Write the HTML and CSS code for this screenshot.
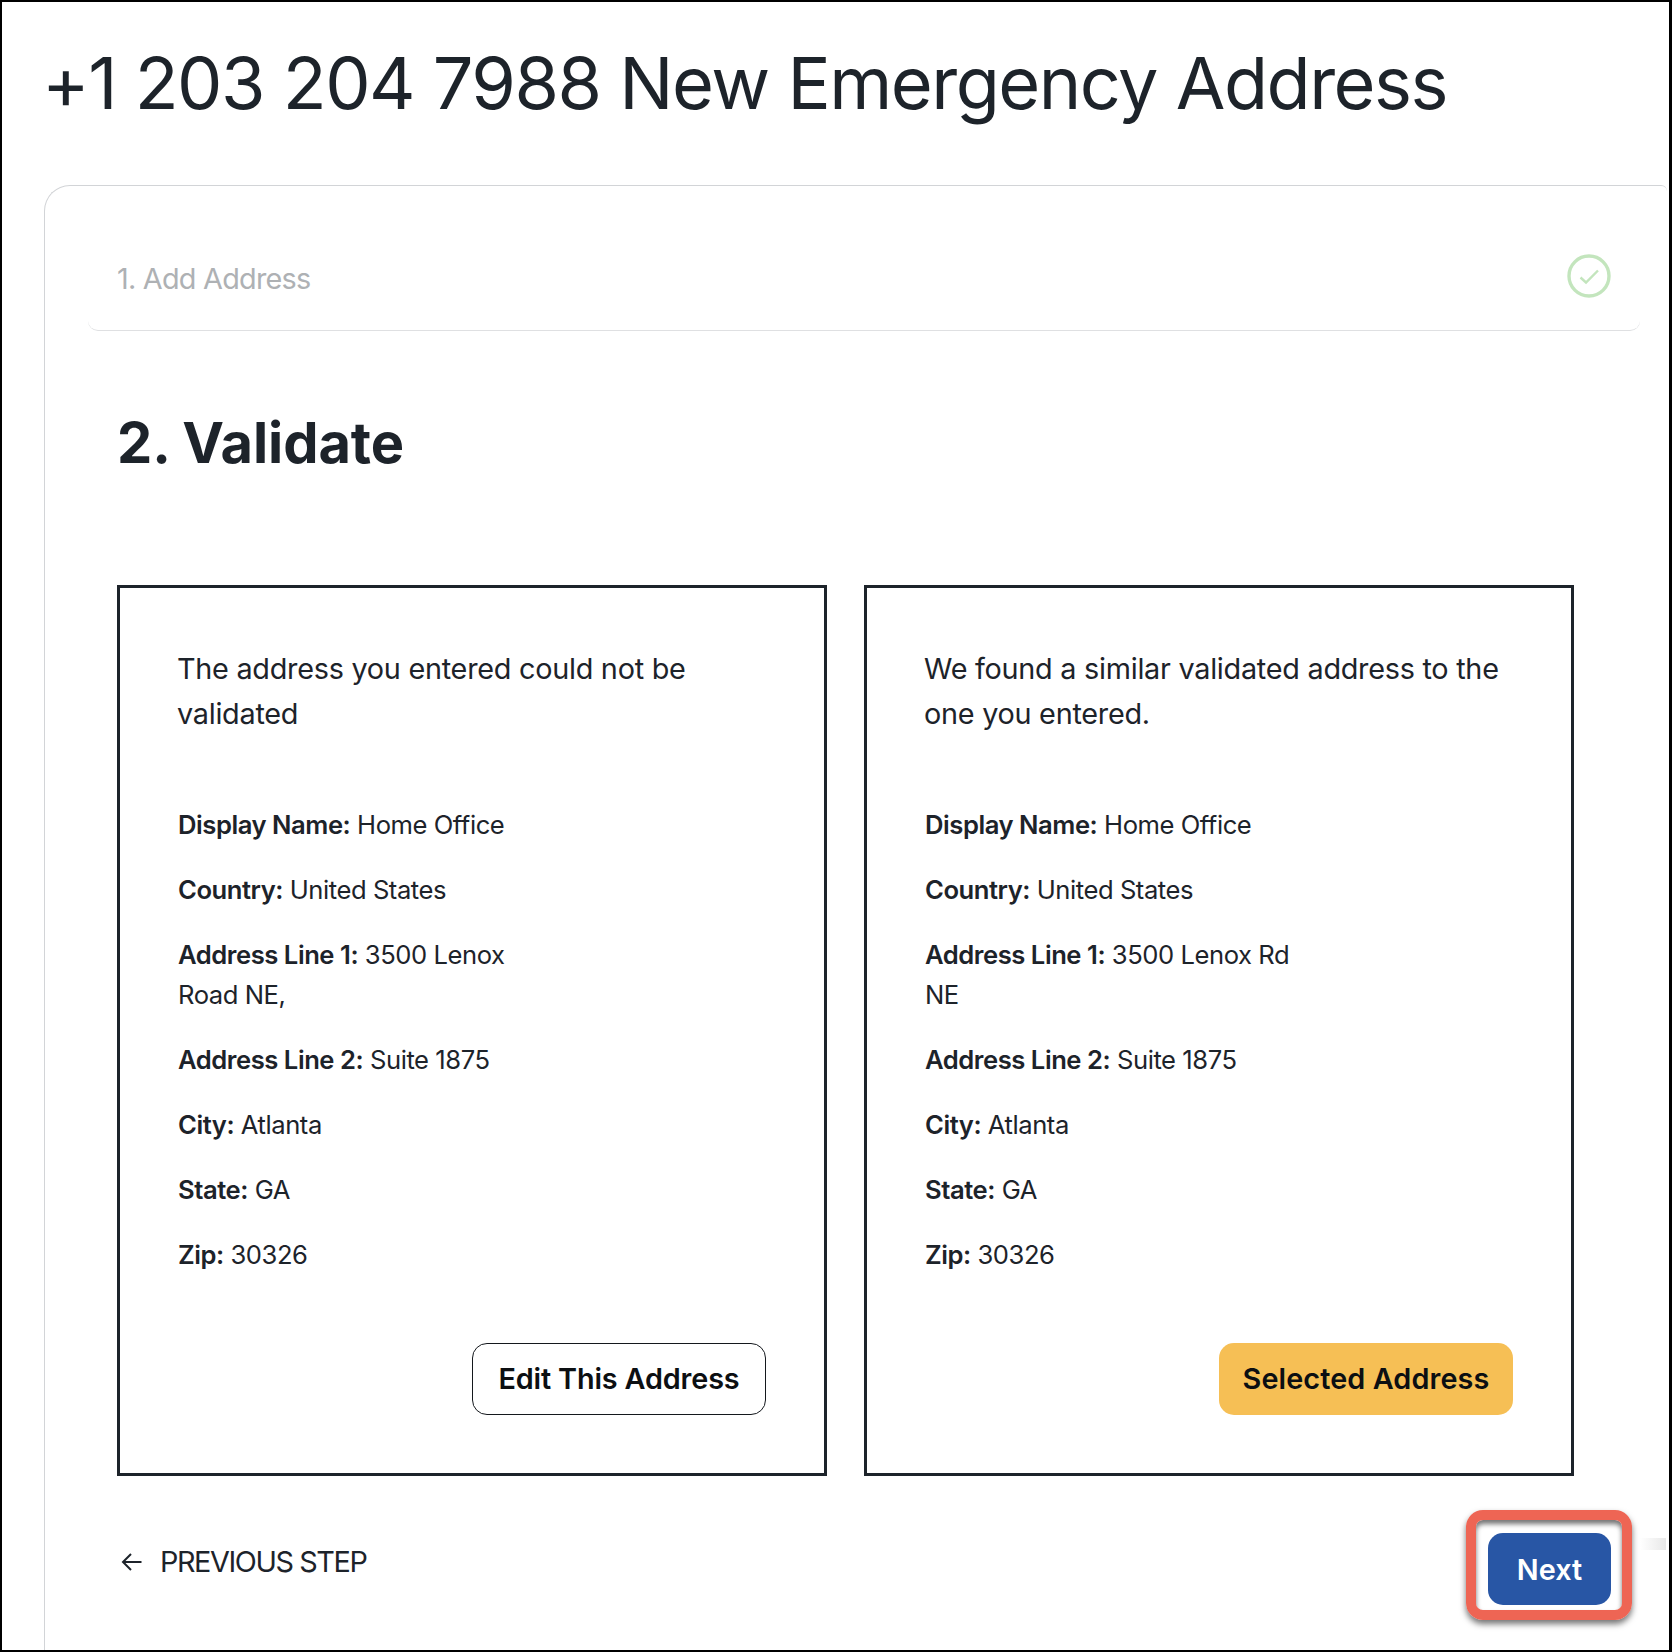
FILE: index.html
```html
<!DOCTYPE html>
<html lang="en">
<head>
<meta charset="utf-8">
<title>New Emergency Address</title>
<link rel="stylesheet" href="styles.css">
</head>
<body>
<div class="frame">
  <h1 class="title">+1 203 204 7988 New Emergency Address</h1>
  <main class="card">
    <div class="step-row">
      <span class="step-label">1. Add Address</span>
      <svg class="check" width="44" height="44" viewBox="0 0 44 44" fill="none" aria-hidden="true">
        <circle cx="22" cy="22" r="20" stroke="#c3e5bd" stroke-width="3.4"/>
        <path d="M13.5 23.5 L19 28.5 L31 16.5" stroke="#c3e5bd" stroke-width="2.4"/>
      </svg>
    </div>
    <section class="step">
      <h2 class="step-title">2. Validate</h2>
      <div class="options">
        <article class="option">
          <p class="option-intro">The address you entered could not be<br>validated</p>
          <p class="field"><b>Display Name:</b> Home Office</p>
          <p class="field"><b>Country:</b> United States</p>
          <p class="field"><b>Address Line 1:</b> 3500 Lenox<br>Road NE,</p>
          <p class="field"><b>Address Line 2:</b> Suite 1875</p>
          <p class="field"><b>City:</b> Atlanta</p>
          <p class="field"><b>State:</b> GA</p>
          <p class="field"><b>Zip:</b> 30326</p>
          <div class="option-actions"><button class="btn btn-outline">Edit This Address</button></div>
        </article>
        <article class="option">
          <p class="option-intro">We found a similar validated address to the<br>one you entered.</p>
          <p class="field"><b>Display Name:</b> Home Office</p>
          <p class="field"><b>Country:</b> United States</p>
          <p class="field"><b>Address Line 1:</b> 3500 Lenox Rd<br>NE</p>
          <p class="field"><b>Address Line 2:</b> Suite 1875</p>
          <p class="field"><b>City:</b> Atlanta</p>
          <p class="field"><b>State:</b> GA</p>
          <p class="field"><b>Zip:</b> 30326</p>
          <div class="option-actions"><button class="btn btn-selected">Selected Address</button></div>
        </article>
      </div>
      <div class="step-footer">
        <a class="prev" href="#">
          <svg width="22" height="20" viewBox="0 0 22 20" fill="none" aria-hidden="true">
            <path d="M20.5 10 H2 M10 2 L2 10 L10 18" stroke="#1d232a" stroke-width="2"/>
          </svg>
          <span>PREVIOUS STEP</span>
        </a>
        <div class="next-wrap">
          <button class="btn btn-next">Next</button>
          <span class="highlight"></span>
          <span class="smudge"></span>
        </div>
      </div>
    </section>
  </main>
</div>
</body>
</html>
```
FILE: styles.css
```css
* { box-sizing: border-box; }
html, body { margin: 0; background: #fff; }
body {
  font-family: Inter, "Liberation Sans", sans-serif;
  color: #1d232a;
}
.frame {
  width: 1672px;
  height: 1652px;
  border: solid #000;
  border-width: 2px 3px 2px 2px;
  overflow: hidden;
  display: flex;
  flex-direction: column;
}
.title {
  margin: 31px 0 0 40px;
  height: 152px;
  font-size: 72px;
  line-height: 100px;
  font-weight: 400;
  letter-spacing: -1.5px;
  white-space: nowrap;
}
.card {
  flex: 1;
  margin: 0 2px 0 42px;
  padding: 37px 27px 0 43px;
  border: solid #d2d4d7;
  border-width: 1px 0 0 1px;
  border-top-left-radius: 26px;
  border-top-right-radius: 6px;
}
.step-row {
  height: 108px;
  padding: 0 29px;
  display: flex;
  align-items: center;
  justify-content: space-between;
  border-bottom: 1px solid #dfe0e2;
  border-radius: 0 0 10px 10px;
}
.step-label { font-size: 28.8px; color: #aeb1b4; letter-spacing: -0.75px; padding-top: 4px; }
.check { display: block; margin-top: -2px; }
.step { padding: 0 29px; }
.step-title {
  margin: 78px 0 108px;
  font-size: 56px;
  line-height: 68px;
  font-weight: 700;
  letter-spacing: -0.1px;
}
.options {
  display: grid;
  grid-template-columns: 710px 710px;
  column-gap: 37px;
}
.option {
  border: 3px solid #1d232a;
  padding: 58px 58px 58px 57px;
}
.option-intro {
  margin: 0 0 69px;
  font-size: 28.8px;
  line-height: 45px;
  letter-spacing: -0.26px;
  white-space: nowrap;
}
.field {
  margin: 0 0 25px;
  padding-left: 1px;
  font-size: 25.6px;
  line-height: 40px;
  letter-spacing: -0.45px;
}
.field b { font-weight: 600; }
.option-actions {
  display: flex;
  justify-content: flex-end;
  margin-top: 68px;
}
.btn {
  height: 72px;
  padding: 0 0 2px;
  border: 0;
  border-radius: 15px;
  font: 600 28.8px Inter, "Liberation Sans", sans-serif;
}
.btn-outline { width: 294px; background: #fff; border: 1px solid #14181d; color: #0c0f12; letter-spacing: -0.15px; }
.btn-selected { width: 294px; background: #f6bf55; color: #0c0f12; letter-spacing: 0.1px; }
.btn-next { width: 123px; background: #2856a5; color: #fff; display: block; padding: 0; }
.step-footer {
  display: flex;
  justify-content: space-between;
  align-items: flex-start;
  padding-top: 57px;
}
.prev {
  display: flex;
  align-items: center;
  gap: 17px;
  margin: 9px 0 0 4px;
  font-size: 28.8px;
  line-height: 40px;
  letter-spacing: -1.4px;
  color: #1d232a;
  text-decoration: none;
}
.next-wrap { position: relative; }
.highlight {
  position: absolute;
  left: -22px;
  top: -23px;
  right: -21px;
  bottom: -15px;
  border: 10px solid #ee6554;
  border-radius: 17px;
  box-shadow: 0 4px 6px rgba(0,0,0,.55), inset 0 4px 5px rgba(0,0,0,.55);
  pointer-events: none;
}
.smudge {
  position: absolute;
  left: 152px;
  top: 5px;
  width: 26px;
  height: 12px;
  background: linear-gradient(to right, #fff, #e8e8e8);
}
```
